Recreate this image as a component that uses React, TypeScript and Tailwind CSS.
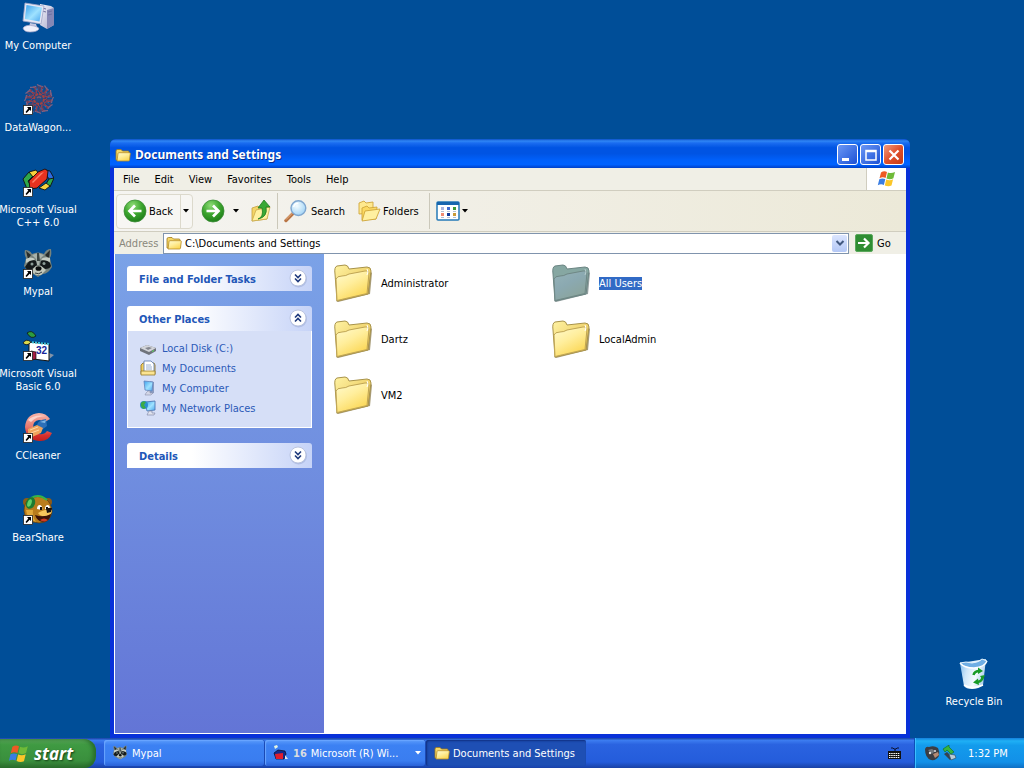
import type { ReactNode } from "react";
import clsx from "clsx";

type Place = { label: string; icon: ReactNode };
type Shortcut = { lines: string[]; icon: ReactNode };

/* Shared gradients, referenced by id from the icons below */
function IconDefs() {
  return (
    <svg className="absolute h-0 w-0" aria-hidden="true">
      <defs>
        <linearGradient id="folderFront" x1="0" y1="0" x2="0.6" y2="1">
          <stop offset="0" stopColor="#fffbd0" />
          <stop offset="0.5" stopColor="#ffee9c" />
          <stop offset="1" stopColor="#fbd755" />
        </linearGradient>
        <linearGradient id="folderBack" x1="0" y1="0" x2="1" y2="1">
          <stop offset="0" stopColor="#fff3a4" />
          <stop offset="1" stopColor="#e2b840" />
        </linearGradient>
        <linearGradient id="selFront" x1="0" y1="0" x2="0.6" y2="1">
          <stop offset="0" stopColor="#96b3b8" />
          <stop offset="0.5" stopColor="#8ba9b1" />
          <stop offset="1" stopColor="#8ba49b" />
        </linearGradient>
        <radialGradient id="greenBall" cx="0.4" cy="0.25" r="0.8">
          <stop offset="0" stopColor="#8fdc77" />
          <stop offset="0.5" stopColor="#3da62f" />
          <stop offset="1" stopColor="#1b7a17" />
        </radialGradient>
        <linearGradient id="screen" x1="0" y1="0" x2="1" y2="1">
          <stop offset="0" stopColor="#3ba0ec" />
          <stop offset="0.55" stopColor="#9fe2ff" />
          <stop offset="1" stopColor="#4aa6ee" />
        </linearGradient>
        <linearGradient id="caseSide" x1="0" y1="0" x2="1" y2="1">
          <stop offset="0" stopColor="#f4f4fb" />
          <stop offset="1" stopColor="#a9aacb" />
        </linearGradient>
        <radialGradient id="lens" cx="0.4" cy="0.35" r="0.7">
          <stop offset="0" stopColor="#f4fcff" />
          <stop offset="1" stopColor="#9fd2f5" />
        </radialGradient>
        <linearGradient id="bin" x1="0" y1="0" x2="1" y2="0.3">
          <stop offset="0" stopColor="#7db9ea" />
          <stop offset="0.35" stopColor="#cfe7fa" />
          <stop offset="0.7" stopColor="#f4fbff" />
          <stop offset="1" stopColor="#b3d3ee" />
        </linearGradient>
        <linearGradient id="cRing" x1="0" y1="0" x2="0" y2="1">
          <stop offset="0" stopColor="#f6b5aa" />
          <stop offset="0.5" stopColor="#e8786c" />
          <stop offset="0.8" stopColor="#d8302c" />
          <stop offset="1" stopColor="#c2201e" />
        </linearGradient>
      </defs>
    </svg>
  );
}

function ShortcutArrow() {
  return (
    <g>
      <rect x="1.5" y="21.5" width="9" height="9" fill="#fff" stroke="#222" strokeWidth="0.8" />
      <path d="M5 23h4v4l-1.3-1.3L4.6 29 3.5 28l2.8-3.6z" fill="#000" />
    </g>
  );
}

function FolderLarge({ selected }: { selected?: boolean }) {
  return (
    <svg className="size-10 shrink-0" viewBox="0 0 40 40" aria-hidden="true">
      <path d="M3 38l2 1 32-8 2-21-1-1z" fill={selected ? "#6d7d7e" : "#8a7a48"} opacity="0.75" />
      <path
        d="M2 11Q1 4 4 3L12 2Q15 2 16 6L34 4Q38 4 38 8L35 31 4 38z"
        fill={selected ? "#86a7a2" : "url(#folderBack)"}
        stroke={selected ? "#6b8583" : "#a8934a"}
        strokeWidth="1"
      />
      <path
        d="M3 16Q4 13 9 13 13 13 16 11L32 8Q36 7 36 10L34 30.500 4 37.500z"
        fill={selected ? "url(#selFront)" : "url(#folderFront)"}
        stroke={selected ? "#6f8785" : "#c0a554"}
        strokeWidth="1"
      />
      <path d="M34 6l1 3-1 3" fill="none" stroke={selected ? "#b6cccb" : "#fff"} strokeWidth="1" />
    </svg>
  );
}

function FolderSmall() {
  return (
    <svg className="size-4 shrink-0" viewBox="0 0 16 16" aria-hidden="true">
      <path d="M1 13V4Q1 2.500 2.500 2.500H6L7.500 4H13Q14 4 14 5V13z" fill="#f6d765" stroke="#a07a1c" strokeWidth="0.8" />
      <path d="M2 14L3 6.500Q3.200 5.700 4 5.700H14.500Q15.400 5.700 15.300 6.600L14.500 13Q14.400 14 13.500 14z" fill="url(#folderFront)" stroke="#b58c28" strokeWidth="0.8" />
    </svg>
  );
}

function WindowsFlag({ className }: { className: string }) {
  return (
    <svg className={className} viewBox="0 0 20 18" aria-hidden="true">
      <path d="M4 2.500Q7 .5 10 2L8.600 8Q5.500 6.500 2.500 8.300z" fill="#ee5a24" />
      <path d="M10.900 2.400Q14 4 18 2L16.400 8.200Q13 10 9.500 8.400z" fill="#6fba38" />
      <path d="M2.300 9.300Q5.200 7.700 8.300 9.100L6.900 15Q4 13.500.8 15.200z" fill="#3a7de2" />
      <path d="M9.200 9.500Q12.700 11 16.100 9.300L14.500 15.500Q11.500 17 7.800 15.400z" fill="#fbc629" />
    </svg>
  );
}

function MyComputerIcon() {
  return (
    <svg className="size-8" viewBox="0 0 32 32" aria-hidden="true">
      <path d="M18 2l11 2 3 2v17l-7 4-7-4z" fill="url(#caseSide)" />
      <path d="M25 8l7-2v17l-7 4z" fill="#8587b5" />
      <path d="M20 6l4 1M20 9l4 1M26 10l4-1M26 13l4-1" stroke="#6f72a0" strokeWidth="1" />
      <path d="M3 1l19 3-3 18L1 19z" fill="#e6e8f4" stroke="#9fa4c6" strokeWidth="0.8" />
      <path d="M4.500 3l15.500 2.500-2.500 14L2.800 17z" fill="url(#screen)" />
      <path d="M8 21l6 1 1 3H7z" fill="#c6c8e0" />
      <path d="M1 26q3-4 11-2 5 1 5 3-2 3-9 3-6 0-7-4z" fill="#f0f0fa" stroke="#a3a5c8" strokeWidth="0.7" />
    </svg>
  );
}

function DataWagonIcon() {
  const spokes = [0, 30, 60, 90, 120, 150, 180, 210, 240, 270, 300, 330];
  return (
    <svg className="size-8" viewBox="0 0 32 32" aria-hidden="true">
      <circle cx="17" cy="15" r="10" fill="none" stroke="#4d4268" strokeWidth="7" strokeDasharray="2 1.500" />
      {spokes.map((angle) => (
        <g key={angle} transform={`rotate(${angle} 17 15)`} fill="none">
          <path d="M17 9q4-3 1-8M17 8q-4-2-3-5" stroke="#93404f" strokeWidth="1" />
          <path d="M15 .5q3 2 6 2" stroke="#7c6486" strokeWidth="1.200" />
          <path d="M19 5l2 1" stroke="#2f6fae" strokeWidth="1.200" />
        </g>
      ))}
      <circle cx="17" cy="15" r="5" fill="#2a4a7e" stroke="#a8403f" strokeWidth="2" strokeDasharray="3 0.800" />
      <path d="M15 14q2-2 4 0" fill="none" stroke="#7c5a6e" strokeWidth="1.500" />
      <ShortcutArrow />
    </svg>
  );
}

function VisualCIcon() {
  return (
    <svg className="size-8" viewBox="0 0 32 32" aria-hidden="true">
      <g stroke="#111" strokeWidth="0.900" strokeLinejoin="round">
        <path d="M1 13l6-7 4 4-5 5 3 5-4 3z" fill="#2fa84a" />
        <path d="M7 6l7-2 3 4-6 3z" fill="#f8d23c" />
        <path d="M24 4l4 1 4 7-4 2-4-5z" fill="#2d6be0" />
        <path d="M32 12l-4 9-4-3 3-5z" fill="#2fa84a" />
        <path d="M24 17l-7 5 6 2 5-4z" fill="#f8d23c" />
        <path d="M16 6l7-3 3 2-1 8-10 9-7 1-1-8z" fill="#e8321f" />
      </g>
      <path d="M19 7l3-1-11 11-1-1z" fill="#ff8068" />
      <ShortcutArrow />
    </svg>
  );
}

function Raccoon() {
  return (
    <g>
      <path d="M3 2q5 0 7 4 6-3 12 0 2-5 7-5 1 6-1 9l2 9q-4 7-9 7l-5 3-5-3Q5 24 2 18l2-8Q2 6 3 2z" fill="#77837d" />
      <path d="M4 3l5 4-3 4zM28 2l-5 5 4 4z" fill="#272c2b" />
      <path d="M10 7l6-2 6 2-4 4-1 6h-2l-1-6z" fill="#a8b2ab" />
      <path d="M15 5h2l1 8h-3z" fill="#3b4542" />
      <path d="M5 16q4-6 9-3l1 4-6 5q-5 0-6-3zM28 15q-4-5-9-2l-1 4 5 4q5 0 6-3z" fill="#151a1b" />
      <path d="M4 11q5-3 9 0l-1 1q-4 0-8 3zM28 10q-5-2-9 1l1 1q4 0 8 2z" fill="#c5cdc4" />
      <circle cx="10" cy="16" r="1.500" fill="#8b9c96" />
      <circle cx="22" cy="15.500" r="1.500" fill="#8b9c96" />
      <path d="M9 23l5-5h5l5 4-5 5h-5z" fill="#c3c9bd" />
      <ellipse cx="16.500" cy="20.500" rx="3" ry="2.300" fill="#0b0d0d" />
      <path d="M13 25q4 2 7-1" stroke="#39403e" fill="none" />
    </g>
  );
}

function MypalIcon() {
  return (
    <svg className="size-8" viewBox="0 0 32 32" aria-hidden="true">
      <Raccoon />
      <ShortcutArrow />
    </svg>
  );
}

function VisualBasicIcon() {
  return (
    <svg className="size-8" viewBox="0 0 32 32" aria-hidden="true">
      <path d="M26 30l6-5-5-2z" fill="#8293a8" />
      <path d="M7 12l20 2v17l-16-2-4-6z" fill="#fff" stroke="#111" strokeWidth="1" />
      <path d="M7 12l20 2" stroke="#3cc0d8" strokeWidth="2" strokeDasharray="2 1" />
      <path d="M5 3q5-4 9 3-5 4-9-3z" fill="#2c9c3f" stroke="#111" strokeWidth="0.800" />
      <path d="M1 13q3-5 8-1-4 5-8 1z" fill="#dcd94c" stroke="#111" strokeWidth="0.800" />
      <path d="M9 21l5 1v7l-4 1z" fill="#a61d42" stroke="#111" strokeWidth="0.700" />
      <text x="14" y="24" fontSize="10" fontWeight="bold" fill="#16259a" fontFamily="Liberation Sans, sans-serif">32</text>
      <ShortcutArrow />
    </svg>
  );
}

function CCleanerIcon() {
  return (
    <svg className="size-8" viewBox="0 0 32 32" aria-hidden="true">
      <path
        d="M28 7Q24 1 17 1 4 2 3 15q1 13 14 14 9 1 13-8l-5-2q-3 4-8 3-6-1-6-7t6-7q3 0 4 3z"
        fill="url(#cRing)"
      />
      <path d="M6 8q6-6 18-4-10 0-15 6z" fill="#fbd3cb" />
      <path d="M15 13q1-5 9-6l1 7-4 3z" fill="#2c6fb8" />
      <path d="M18 10l6-2-1 3z" fill="#7fb7e6" />
      <path d="M6 17l9-4 6 3-2 5-9 4-4-2z" fill="#f0a35c" />
      <path d="M8 18l8-3M9 21l8-3" stroke="#ffd7a6" strokeWidth="1" />
      <ShortcutArrow />
    </svg>
  );
}

function BearShareIcon() {
  return (
    <svg className="size-8" viewBox="0 0 32 32" aria-hidden="true">
      <circle cx="5" cy="8" r="4" fill="#8f5a16" />
      <circle cx="26" cy="8" r="4" fill="#8f5a16" />
      <path d="M7 5q9-5 17 0 6 5 6 13-2 11-13 11Q3 28 2 17q0-8 5-12z" fill="#b87c1d" stroke="#5d3b0c" strokeWidth="0.700" />
      <path d="M4 16q1 9 10 12-4-6-3-12z" fill="#e0a83a" />
      <path d="M9 4q8-5 16 2" stroke="#36b34a" strokeWidth="2" fill="none" />
      <ellipse cx="8.500" cy="9" rx="4.500" ry="6" fill="#1d7a30" transform="rotate(20 8.500 9)" />
      <ellipse cx="7.500" cy="9" rx="2" ry="4" fill="#5fd068" transform="rotate(20 7.500 9)" />
      <path d="M15 15q0-4 3-4 3 1 2 5zM23 15q0-4 3-4 3 1 1 5z" fill="#fff" />
      <path d="M18 13h2v3h-2zM24 13h2v3h-2z" fill="#111" />
      <path d="M16 19q8-5 14-3 0 5-6 6-5 1-8-3z" fill="#f6c65c" />
      <path d="M24 14h6l-1 4-4 1z" fill="#181210" />
      <path d="M13 21q9 3 16-1-1 7-8 8-6-1-8-7z" fill="#3b1208" />
      <path d="M18 26q4-3 8 0-4 3-8 0z" fill="#cf3b22" />
      <ShortcutArrow />
    </svg>
  );
}

function RecycleBinIcon() {
  return (
    <svg className="size-8" viewBox="0 0 32 32" aria-hidden="true">
      <path d="M2 5l26-4-3 26q-4 4-11 4-6 0-8-3z" fill="url(#bin)" />
      <path d="M2 5q6-2 12 0 8-1 10-4l5 2q-2 6-13 7Q6 9 2 5z" fill="#6faee4" />
      <path d="M2 5q4 5 14 5 11-1 13-7" fill="none" stroke="#fff" strokeWidth="1.400" />
      <path d="M2 5q6-2 12 0 8-1 10-4l5 2" fill="none" stroke="#e2f2fd" strokeWidth="1" />
      <path d="M6 27q8 5 19 0" fill="none" stroke="#fff" strokeWidth="1.500" />
      <g fill="none" stroke="#189b28" strokeWidth="2.500">
        <path d="M15.500 17q1-4 6-4" />
        <path d="M24.500 19q0 4-5 5" />
      </g>
      <path d="M20 9.500l5 3.500-5 3zM20 20.500l-5 4 6 2.500zM22 18l5-1-2 5z" fill="#189b28" />
    </svg>
  );
}

/* Explorer toolbar drawings */
function RoundArrow({ back }: { back?: boolean }) {
  return (
    <svg className="size-6 shrink-0" viewBox="0 0 24 24" aria-hidden="true">
      <circle cx="12" cy="12" r="11" fill="url(#greenBall)" stroke="#3b8b36" strokeWidth="0.800" />
      <path
        d={back ? "M18.500 12H7M12 6.500L6.500 12l5.500 5.500" : "M5.500 12H17M12 6.500l5.500 5.500-5.500 5.500"}
        fill="none"
        stroke="#fff"
        strokeWidth="2.700"
      />
    </svg>
  );
}

function UpFolderIcon() {
  return (
    <svg className="size-6" viewBox="0 0 24 24" aria-hidden="true">
      <path d="M3 22L3 9l6-2 2 2 7-1 0 12z" fill="#f4d567" stroke="#c3a040" strokeWidth="0.800" />
      <path d="M3 22l4-11 14-3-3 12z" fill="#fff1a0" stroke="#c9a94a" strokeWidth="0.800" />
      <path d="M9 20q6-2 4-11h-4l6-8 6 7h-4q2 10-8 12z" fill="#39a935" stroke="#1f7c20" strokeWidth="0.800" />
    </svg>
  );
}

function SearchIcon() {
  return (
    <svg className="size-6" viewBox="0 0 24 24" aria-hidden="true">
      <path d="M10 14l-8 8" stroke="#b97545" strokeWidth="3.500" strokeLinecap="round" />
      <path d="M9 14l-7 7" stroke="#eab587" strokeWidth="1" />
      <circle cx="15" cy="9" r="7.700" fill="url(#lens)" stroke="#7fa6cf" strokeWidth="1.500" />
      <path d="M10 8q1-4 5-4" fill="none" stroke="#fff" strokeWidth="1.500" />
    </svg>
  );
}

function FoldersIcon() {
  return (
    <svg className="size-6" viewBox="0 0 24 24" aria-hidden="true">
      <path d="M2 15V4l5-2 2 2 7-1v11z" fill="#ffe98e" stroke="#cfa63a" strokeWidth="0.900" />
      <path d="M5 21V9l5-2 2 2 8-1-1 12z" fill="#fbd962" stroke="#cfa63a" strokeWidth="0.900" />
      <path d="M5 22l3-10 15-2-4 10z" fill="#fff0a0" stroke="#cfa63a" strokeWidth="0.900" />
    </svg>
  );
}

function ViewsIcon() {
  return (
    <svg className="h-5 w-6" viewBox="0 0 24 20" aria-hidden="true">
      <rect x="1" y="1" width="22" height="18" rx="1" fill="#fff" stroke="#2579b8" strokeWidth="1.500" />
      <rect x="1" y="1" width="22" height="3" fill="#1766ae" />
      <path d="M5 6h3v3H5z" fill="#a9b4e0" />
      <path d="M5 12h3v3H5z" fill="#ef8a70" />
      <path d="M11 6h3v3h-3z" fill="#3e6bd0" />
      <path d="M11 12h3v3h-3z" fill="#123c9c" />
      <path d="M17 6h3v3h-3z" fill="#3d9a35" />
      <path d="M17 12h3v3h-3z" fill="#c99a35" />
      <path d="M5 10.500h3M11 10.500h3M17 10.500h3M5 16.500h3M11 16.500h3M17 16.500h3" stroke="#b4bfd0" strokeWidth="1" />
    </svg>
  );
}

function CaretDown({ className }: { className?: string }) {
  return (
    <svg className={clsx("h-1 w-1.5", className)} viewBox="0 0 6 4" aria-hidden="true">
      <path d="M0 0h6L3 3.500z" fill="currentColor" />
    </svg>
  );
}

/* Task pane drawings */
function DiskIcon() {
  return (
    <svg className="size-4" viewBox="0 0 16 16" aria-hidden="true">
      <path d="M0 8l7-3 9 3v3l-7 4-9-4z" fill="#6f737c" />
      <path d="M0 8l7-3 9 3-7 4z" fill="#d3d5da" />
      <path d="M5 8l4-1 3 1-4 2z" fill="#83868f" />
      <path d="M12 11l2-1v1l-2 1z" fill="#58e05a" />
    </svg>
  );
}

function DocumentsIcon() {
  return (
    <svg className="size-4" viewBox="0 0 16 16" aria-hidden="true">
      <path d="M1 14V5l2-2h11l1 2v9z" fill="#f3cf5c" stroke="#96782c" strokeWidth="0.900" />
      <path d="M4 12V1h7l3 3v8z" fill="#fff" stroke="#6a86b6" strokeWidth="0.900" />
      <path d="M6 5h5M6 7h6M6 9h6" stroke="#8fa7cd" strokeWidth="0.900" />
      <path d="M1 11h14v4H1z" fill="#fbe492" stroke="#96782c" strokeWidth="0.800" />
    </svg>
  );
}

function SmallComputerIcon() {
  return (
    <svg className="size-4" viewBox="0 0 16 16" aria-hidden="true">
      <path d="M10 1l4 1v11l-4 1z" fill="#8c9cc0" />
      <path d="M4 1l9 1-1 9-7-1z" fill="url(#screen)" stroke="#5f83bd" strokeWidth="0.800" />
      <path d="M8 11h2v2h3l-2 2H5l1-2z" fill="#d3d6e6" stroke="#8b90ad" strokeWidth="0.600" />
    </svg>
  );
}

function NetworkIcon() {
  return (
    <svg className="size-4" viewBox="0 0 16 16" aria-hidden="true">
      <path d="M5 2l10-1v9l-8 1z" fill="url(#screen)" stroke="#4f79b5" strokeWidth="0.900" />
      <circle cx="4" cy="5" r="4" fill="#2a8fd2" />
      <path d="M1 3q2-3 5-1L4 5l2 3-3 1-2-3z" fill="#3cab46" />
      <path d="M9 11h3v2h3l-1 2H7l1-2z" fill="#e0e3ef" stroke="#878dab" strokeWidth="0.700" />
    </svg>
  );
}

function Chevrons({ up }: { up?: boolean }) {
  return (
    <svg className="size-5" viewBox="0 0 20 20" aria-hidden="true">
      <circle cx="10.500" cy="10" r="8.500" fill="#9faed9" opacity="0.600" />
      <circle cx="10" cy="9" r="8" fill="#fff" stroke="#b6bfdb" strokeWidth="0.900" />
      <path
        d={up ? "M7 8.500l3-3 3 3M7 12.500l3-3 3 3" : "M7 5.500l3 3 3-3M7 9.500l3 3 3-3"}
        fill="none"
        stroke="#1f3a7c"
        strokeWidth="1.600"
      />
    </svg>
  );
}

const SHORTCUTS: Shortcut[] = [
  { lines: ["My Computer"], icon: <MyComputerIcon /> },
  { lines: ["DataWagon..."], icon: <DataWagonIcon /> },
  { lines: ["Microsoft Visual", "C++ 6.0"], icon: <VisualCIcon /> },
  { lines: ["Mypal"], icon: <MypalIcon /> },
  { lines: ["Microsoft Visual", "Basic 6.0"], icon: <VisualBasicIcon /> },
  { lines: ["CCleaner"], icon: <CCleanerIcon /> },
  { lines: ["BearShare"], icon: <BearShareIcon /> },
];

const MENUS = ["File", "Edit", "View", "Favorites", "Tools", "Help"];

const PLACES: Place[] = [
  { label: "Local Disk (C:)", icon: <DiskIcon /> },
  { label: "My Documents", icon: <DocumentsIcon /> },
  { label: "My Computer", icon: <SmallComputerIcon /> },
  { label: "My Network Places", icon: <NetworkIcon /> },
];

const FOLDERS = [
  { name: "Administrator" },
  { name: "All Users", selected: true },
  { name: "Dartz" },
  { name: "LocalAdmin" },
  { name: "VM2" },
];

function DesktopIcon({ lines, icon }: Shortcut) {
  return (
    <button type="button" className="flex w-19 flex-col items-center gap-[5px] text-white">
      {icon}
      <span>
        {lines.map((line) => (
          <span key={line} className="block whitespace-nowrap leading-[13px]">
            {line}
          </span>
        ))}
      </span>
    </button>
  );
}

function TitleBar() {
  const frame =
    "flex size-[21px] items-center justify-center rounded-[3px] border border-white";
  return (
    <header className="flex h-[29px] shrink-0 items-center rounded-t-md bg-[linear-gradient(180deg,#0a50c8_0%,#2f86f5_7%,#1a6cf0_14%,#0054e3_30%,#0054e3_50%,#0061fc_75%,#0062ff_88%,#0040c8_100%)] pt-0.5 pr-1.5 pl-[5px] text-white">
      <FolderSmall />
      <h1 className="ml-1 flex-1 font-['Noto_Sans',sans-serif] text-[12px] font-bold [text-shadow:1px_1px_#0a2f8c]">
        Documents and Settings
      </h1>
      <div className="flex gap-0.5">
        <button type="button" aria-label="Minimize" className={clsx(frame, "bg-linear-to-br from-[#6b97f5] to-[#1c4fd4]")}>
          <svg className="size-4" viewBox="0 0 16 16"><path d="M2 11h7v3H2z" fill="#fff" /></svg>
        </button>
        <button type="button" aria-label="Maximize" className={clsx(frame, "bg-linear-to-br from-[#6b97f5] to-[#1c4fd4]")}>
          <svg className="size-4" viewBox="0 0 16 16"><path d="M3 3.500h10V13H3zM3 4.500h10" fill="none" stroke="#fff" strokeWidth="1.500" /></svg>
        </button>
        <button type="button" aria-label="Close" className={clsx(frame, "bg-linear-to-br from-[#f09a7c] via-[#e0502c] to-[#c53a16]")}>
          <svg className="size-4" viewBox="0 0 16 16"><path d="M3.500 3.500l9 9M12.500 3.500l-9 9" stroke="#fff" strokeWidth="2.200" /></svg>
        </button>
      </div>
    </header>
  );
}

function MenuBar() {
  return (
    <div className="flex h-[23px] shrink-0 border-b border-[#d0cdbf]">
      <nav className="flex flex-1 items-center gap-[15px] pl-[9px]">
        {MENUS.map((menu) => (
          <button key={menu} type="button">
            {menu}
          </button>
        ))}
      </nav>
      <div className="flex w-10 items-center justify-center border-l border-[#d0cdbf] bg-white">
        <WindowsFlag className="h-[18px] w-5" />
      </div>
    </div>
  );
}

function ToolBar() {
  return (
    <div className="flex h-[41px] shrink-0 items-center border-b border-[#d0cdbf] bg-linear-to-r from-[#f5f4f1] to-[#ece9d8]">
      <div className="ml-0.5 flex h-[35px] items-stretch rounded-sm border border-[#dcd9cc] bg-[#f7f6f3]">
        <button type="button" className="flex w-[63px] items-center gap-0.5 pl-1.5">
          <RoundArrow back />
          Back
        </button>
        <button type="button" aria-label="Back history" className="flex w-3 items-center justify-center border-l border-[#dcd9cc] pr-0.5">
          <CaretDown />
        </button>
      </div>
      <button type="button" aria-label="Forward" className="ml-2">
        <RoundArrow />
      </button>
      <button type="button" aria-label="Forward history" className="ml-2">
        <CaretDown />
      </button>
      <button type="button" aria-label="Up" className="ml-2.5">
        <UpFolderIcon />
      </button>
      <div className="ml-1 h-9 w-px bg-[#cbc8ba]" />
      <button type="button" className="ml-1.5 flex w-[61px] items-center gap-1">
        <SearchIcon />
        Search
      </button>
      <button type="button" className="ml-3 flex w-[62px] items-center gap-0.5">
        <FoldersIcon />
        Folders
      </button>
      <div className="ml-2.5 h-9 w-px bg-[#cbc8ba]" />
      <button type="button" aria-label="Views" className="ml-1.5 flex items-center gap-0.5">
        <ViewsIcon />
        <CaretDown />
      </button>
    </div>
  );
}

function AddressBar() {
  return (
    <div className="flex h-[22px] shrink-0 items-center">
      <label htmlFor="address" className="w-[49px] pl-[5px] text-[#8a887c]">
        Address
      </label>
      <div className="flex h-[21px] flex-1 items-center border border-[#8094ad] bg-white pl-0.5">
        <FolderSmall />
        <input
          id="address"
          className="ml-[3px] min-w-0 flex-1 bg-transparent outline-none"
          defaultValue="C:\Documents and Settings"
        />
        <button
          type="button"
          aria-label="Show addresses"
          className="mr-px flex h-[17px] w-[15px] items-center justify-center rounded-xs bg-linear-to-b from-[#dbe5fe] to-[#b4c8f6]"
        >
          <svg className="size-2.5" viewBox="0 0 10 10"><path d="M1.500 3L5 6.500 8.500 3" fill="none" stroke="#41587f" strokeWidth="2" /></svg>
        </button>
      </div>
      <button type="button" className="flex w-[57px] items-center gap-1 pl-1.5">
        <svg className="size-[18px]" viewBox="0 0 18 18" aria-hidden="true">
          <rect x="0.500" y="0.500" width="17" height="17" rx="1.500" fill="#2f8d33" stroke="#5aa75b" />
          <path d="M3 9h10M9 4.500L13.500 9 9 13.500" fill="none" stroke="#fff" strokeWidth="2.200" />
        </svg>
        Go
      </button>
    </div>
  );
}

function TaskPanel({ title, open, children }: { title: string; open?: boolean; children?: ReactNode }) {
  return (
    <section>
      <h2>
        <button
          type="button"
          aria-expanded={!!open}
          className="flex h-[25px] w-full items-center justify-between rounded-t-[3px] bg-linear-to-r from-white from-35% to-[#c6d3f7] pr-1 pl-3 font-bold text-[#2257b8]"
        >
          <span className="pt-0.5">{title}</span>
          <Chevrons up={open} />
        </button>
      </h2>
      {open && (
        <div className="border border-t-0 border-white bg-[#d6dff7] px-3 pt-[7px] pb-[9px]">{children}</div>
      )}
    </section>
  );
}

function ExplorerWindow() {
  return (
    <section className="mt-[139px] flex min-w-0 flex-1 flex-col rounded-t-md bg-[#0831d9]">
      <TitleBar />
      <div className="mx-1 mb-1 flex flex-1 flex-col bg-[#f0efe6]">
        <MenuBar />
        <ToolBar />
        <AddressBar />
        <div className="flex flex-1 bg-white">
          <aside className="mb-px ml-px flex w-[209px] shrink-0 flex-col gap-[15px] bg-linear-to-b from-[#7ba2e7] to-[#6375d6] p-3">
            <TaskPanel title="File and Folder Tasks" />
            <TaskPanel title="Other Places" open>
              <ul>
                {PLACES.map((place) => (
                  <li key={place.label}>
                    <a href="#" className="flex h-5 items-center gap-1.5 text-[#2b5ab8]">
                      {place.icon}
                      {place.label}
                    </a>
                  </li>
                ))}
              </ul>
            </TaskPanel>
            <TaskPanel title="Details" />
          </aside>
          <div className="grid flex-1 auto-rows-[56px] grid-cols-[repeat(auto-fill,218px)] content-start pt-px pl-[9px]">
            {FOLDERS.map((folder) => (
              <button key={folder.name} type="button" className="flex items-center gap-2 text-left">
                <FolderLarge selected={folder.selected} />
                <span className={clsx("leading-[13px]", folder.selected && "bg-[#316ac5] text-white")}>
                  {folder.name}
                </span>
              </button>
            ))}
          </div>
        </div>
      </div>
    </section>
  );
}

function TaskBar() {
  const task =
    "flex h-[26px] w-40 items-center gap-1 rounded-[3px] bg-[linear-gradient(180deg,#5a9bfb,#3c81f3_20%,#3a7df0_80%,#2a62d8)] pl-2 shadow-[inset_1px_1px_1px_#6aa6ff,1px_0_1px_#1a48b0]";
  return (
    <footer className="flex h-[30px] shrink-0 items-stretch bg-[linear-gradient(180deg,#1941a5_0%,#3c7cf0_8%,#2a63e0_22%,#245cdb_80%,#1941a5_100%)] text-white">
      <button
        type="button"
        className="mt-px flex w-24 items-center gap-1 rounded-r-xl bg-[linear-gradient(180deg,#5aa65a,#3f9a42_20%,#3a8f3d_75%,#2b6d2d)] pl-2 font-['Open_Sans',sans-serif] text-[17px] font-bold italic shadow-[inset_-3px_0_4px_#276b2a] [text-shadow:1px_1px_2px_#123d14]"
      >
        <WindowsFlag className="h-5 w-[22px]" />
        start
      </button>
      <div className="ml-2 flex flex-1 items-center gap-px">
        <button type="button" className={task}>
          <svg className="size-4" viewBox="0 0 32 32" aria-hidden="true"><Raccoon /></svg>
          Mypal
        </button>
        <button type="button" className={task}>
          <svg className="size-4" viewBox="0 0 16 16" aria-hidden="true">
            <path d="M1 1l3-1 1 2-3 2z" fill="#e4f4e2" />
            <path d="M1 8l4-3 7 1 1 3-2 5H3z" fill="#122a8c" stroke="#0a0a20" strokeWidth="0.700" />
            <path d="M2 9l8-1v6H3z" fill="#e01d2e" />
            <path d="M12 10l3 4h-3z" fill="#e0e6ea" />
          </svg>
          <b className="text-[#d9dde0]">16</b>
          <span className="flex-1 text-left whitespace-nowrap">Microsoft (R) Wi...</span>
          <CaretDown className="mr-1" />
        </button>
        <button
          type="button"
          className="flex h-[26px] w-40 items-center gap-[3px] rounded-xs bg-[#1e4fb4] pl-2 whitespace-nowrap shadow-[inset_1px_1px_2px_#0f2f80]"
        >
          <FolderSmall />
          Documents and Settings
        </button>
      </div>
      <svg className="mr-3 size-[15px] self-center" viewBox="0 0 15 15" aria-hidden="true">
        <path d="M4 2h2l1 1h2l1-1h2M8 3v2" fill="none" stroke="#0a1030" strokeWidth="1" />
        <path d="M1 5h13v8H1z" fill="#111" />
        <path d="M2 7.500h11M2 9.500h11M2 11.500h11" stroke="#fff" strokeWidth="1.200" strokeDasharray="1.500 0.700" />
      </svg>
      <div className="flex w-[110px] items-center gap-0.5 border-l border-[#0c4fb8] bg-[linear-gradient(180deg,#1580dc,#1fb0f5_10%,#139bec_25%,#1290e8_80%,#0f6fc4)] pl-[9px] shadow-[inset_1px_0_#3cc0ff]">
        <svg className="size-4" viewBox="0 0 16 16" aria-hidden="true">
          <path d="M1 4q1-3 4-2 5-2 9 1 2 4 1 8-3 5-8 4Q1 13 1 4z" fill="#3b3d42" />
          <path d="M4 5l4-1 3 2-3 3z" fill="#73777d" />
          <path d="M9 9l5-2 1 3-4 3z" fill="#b58a72" />
          <circle cx="6" cy="8" r="1.200" fill="#dfe5e8" />
          <circle cx="11" cy="6" r="1" fill="#dfe5e8" />
        </svg>
        <svg className="size-4" viewBox="0 0 16 16" aria-hidden="true">
          <path d="M2 9l3-2 6 6-3 2z" fill="#35414f" />
          <path d="M7 9l6 1 1 3-5 2z" fill="#b9cbd8" stroke="#34536c" strokeWidth="0.700" />
          <path d="M1 4l6-4v2l5 5-3 2-4-4-2 2z" fill="#35b53f" stroke="#126b1c" strokeWidth="0.600" />
        </svg>
        <time className="ml-2">1:32 PM</time>
      </div>
    </footer>
  );
}

export default function App() {
  return (
    <div className="flex min-h-screen flex-col bg-[#004e98] font-['DejaVu_Sans_Condensed','DejaVu_Sans',sans-serif] text-[11px] leading-[13px] text-black">
      <IconDefs />
      <main className="flex flex-1">
        <nav aria-label="Desktop" className="mr-[34px] grid w-19 auto-rows-[82px] content-start pt-0.5">
          {SHORTCUTS.map((shortcut) => (
            <DesktopIcon key={shortcut.lines.join(" ")} {...shortcut} />
          ))}
        </nav>
        <ExplorerWindow />
        <div className="flex w-[114px] shrink-0 items-end justify-end pr-3 pb-[30px]">
          <DesktopIcon lines={["Recycle Bin"]} icon={<RecycleBinIcon />} />
        </div>
      </main>
      <TaskBar />
    </div>
  );
}
